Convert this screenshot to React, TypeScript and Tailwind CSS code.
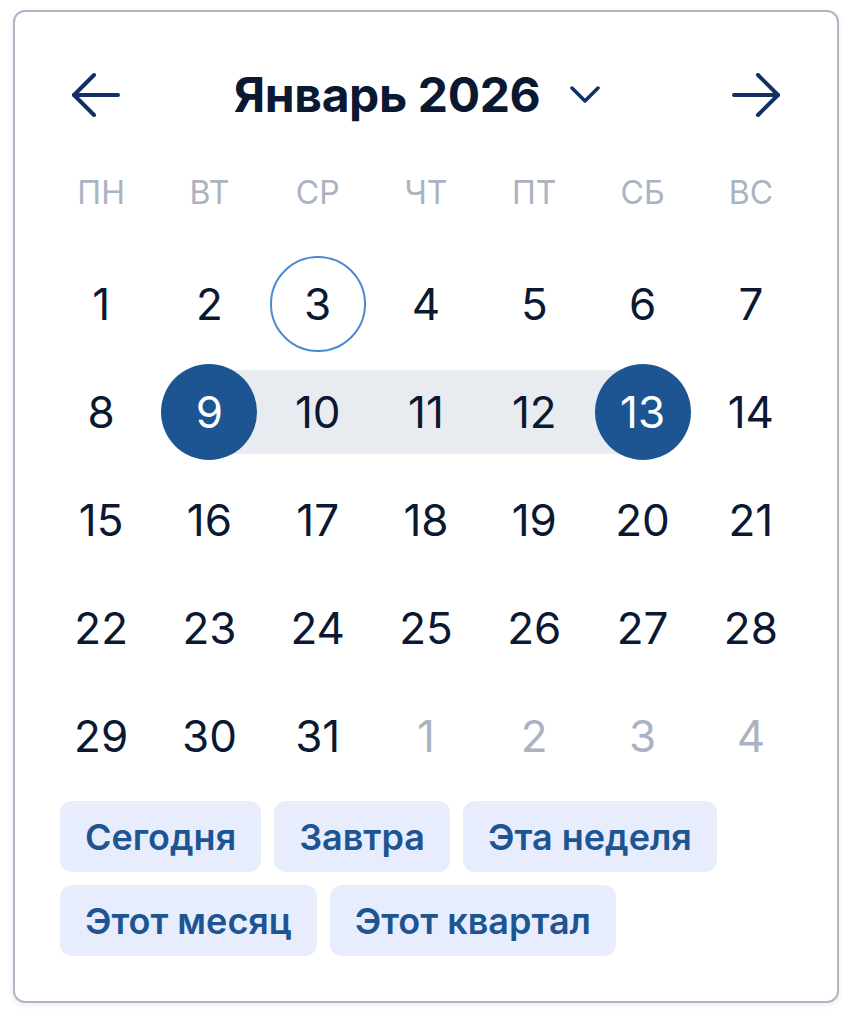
import React from 'react';

const weekdays = ['ПН', 'ВТ', 'СР', 'ЧТ', 'ПТ', 'СБ', 'ВС'];

type Day = { n: number; muted?: boolean };

const days: Day[] = [
  ...Array.from({ length: 31 }, (_, i) => ({ n: i + 1 })),
  ...[1, 2, 3, 4].map((n) => ({ n, muted: true })),
];

const TODAY = 3;
const RANGE_START = 9;
const RANGE_END = 13;

const presets = [['Сегодня', 'Завтра', 'Эта неделя'], ['Этот месяц', 'Этот квартал']];

function ArrowLeft() {
  return (
    <svg width="50" height="44" viewBox="0 0 50 44" fill="none" stroke="#0f3163" strokeWidth="4" strokeLinecap="round" strokeLinejoin="round">
      <path d="M47 22H3" />
      <path d="M23 2 3 22l20 20" />
    </svg>
  );
}

function ArrowRight() {
  return (
    <svg width="50" height="44" viewBox="0 0 50 44" fill="none" stroke="#0f3163" strokeWidth="4" strokeLinecap="round" strokeLinejoin="round">
      <path d="M3 22h44" />
      <path d="m27 2 20 20-20 20" />
    </svg>
  );
}

function Chevron() {
  return (
    <svg width="30" height="18" viewBox="0 0 30 18" fill="none" stroke="#0f3163" strokeWidth="3.5" strokeLinecap="round" strokeLinejoin="round">
      <path d="m2 2 13 13L28 2" />
    </svg>
  );
}

function DayCell({ day }: { day: Day }) {
  const inRange = !day.muted && day.n >= RANGE_START && day.n <= RANGE_END;
  const isEdge = !day.muted && (day.n === RANGE_START || day.n === RANGE_END);
  const isToday = !day.muted && day.n === TODAY;

  return (
    <div className="relative flex h-[108px] items-center justify-center">
      {inRange && (
        <div
          className={
            'absolute top-[12px] h-[84px] bg-[#e8ebef] ' +
            (day.n === RANGE_START ? 'left-1/2 right-0' : day.n === RANGE_END ? 'left-0 right-1/2' : 'left-0 right-0')
          }
        />
      )}
      <div
        className={
          'relative flex h-[96px] w-[96px] items-center justify-center rounded-full text-[44px] ' +
          (isEdge
            ? 'bg-[#1c5592] text-white'
            : isToday
              ? 'border-2 border-[#4a8ad0] text-[#0b1832]'
              : day.muted
                ? 'text-[#aab3c2]'
                : 'text-[#0b1832]')
        }
      >
        {day.n}
      </div>
    </div>
  );
}

export default function App() {
  return (
    <div className="min-h-screen bg-white pl-[13px] pt-[10px]" style={{ fontFamily: 'Inter, "Noto Sans", sans-serif' }}>
      <div className="w-[826px] rounded-[12px] border-2 border-[#aeb7c6] bg-white pb-[45px] pt-[47px] shadow-[0_2px_6px_rgba(15,30,60,0.08)]">
        {/* Header */}
        <div className="flex h-[72px] items-center px-[56px]">
          <button className="flex h-[48px] w-[50px] items-center justify-center">
            <ArrowLeft />
          </button>
          <div className="mr-[18px] flex flex-1 items-center justify-center gap-[30px]">
            <span className="text-[48px] font-bold tracking-[-0.4px] text-[#0b1832]">Январь 2026</span>
            <Chevron />
          </div>
          <button className="flex h-[48px] w-[50px] items-center justify-center">
            <ArrowRight />
          </button>
        </div>

        {/* Weekdays */}
        <div className="mt-[38px] grid grid-cols-7 px-[32px]">
          {weekdays.map((w) => (
            <div key={w} className="flex h-[48px] items-center justify-center text-[32px] text-[#aab3c2]">
              {w}
            </div>
          ))}
        </div>

        {/* Days */}
        <div className="mt-[33px] grid grid-cols-7 px-[32px]">
          {days.map((d, i) => (
            <DayCell key={i} day={d} />
          ))}
        </div>

        {/* Presets */}
        <div className="mt-[11px] flex flex-col gap-[13px] px-[45px]">
          {presets.map((row, r) => (
            <div key={r} className="flex gap-[13px]">
              {row.map((p) => (
                <button
                  key={p}
                  className="flex h-[71px] items-center rounded-[12px] bg-[#e8edfd] px-[25px] text-[36px] font-semibold text-[#1c5592]"
                >
                  {p}
                </button>
              ))}
            </div>
          ))}
        </div>
      </div>
    </div>
  );
}
